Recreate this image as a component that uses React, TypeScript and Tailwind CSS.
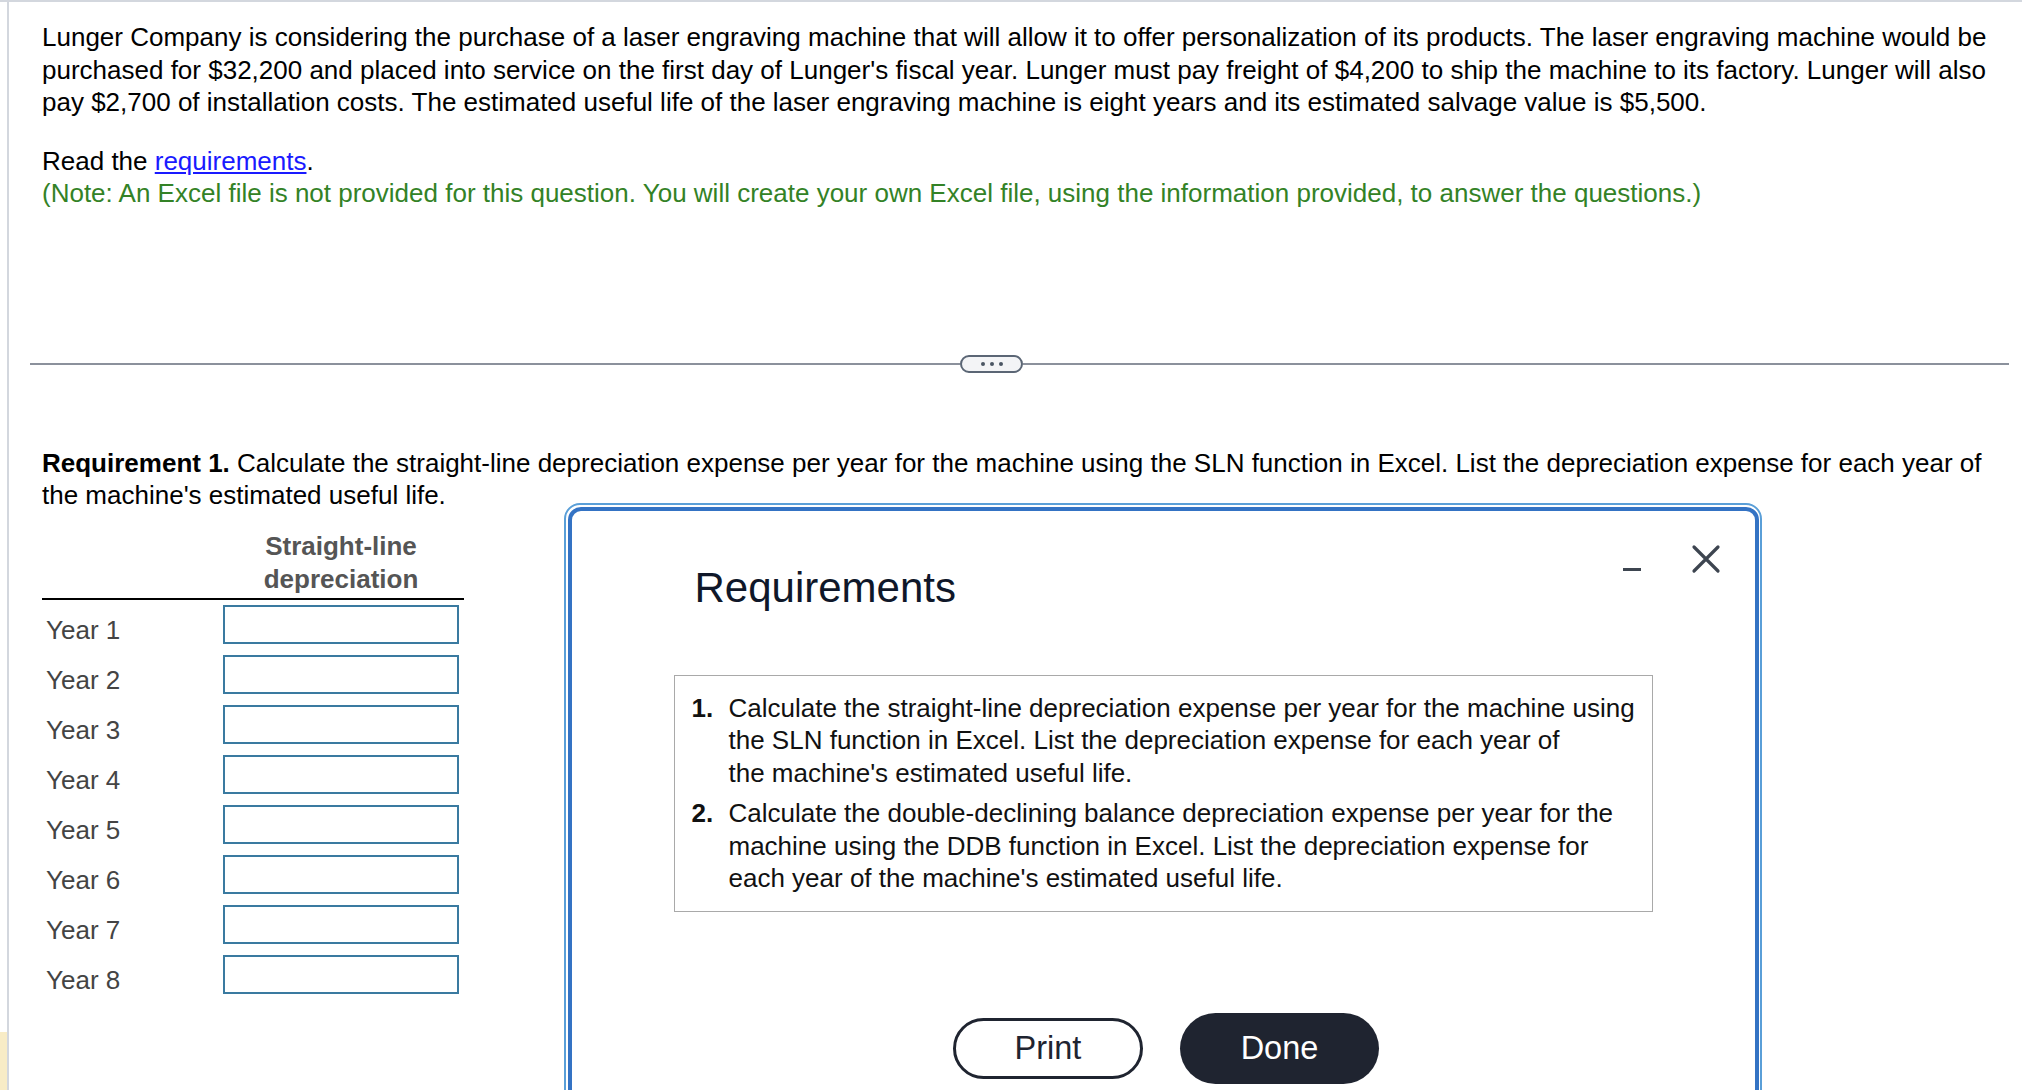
const years = ['Year 1', 'Year 2', 'Year 3', 'Year 4', 'Year 5', 'Year 6', 'Year 7', 'Year 8'];

const CloseIcon = () => (
  <svg width="30" height="30" viewBox="0 0 30 30" fill="none" stroke="#3d4550" strokeWidth="3.2" strokeLinecap="round">
    <path d="M3 3 L27 27 M27 3 L3 27" />
  </svg>
);

const RequirementsModal = () => {
  return (
    <div className="absolute left-[564px] top-[501px] w-[1198px] h-[640px] rounded-[16px] border-[2px] border-[#5a9fd8] p-[1.5px] bg-white">
      <div className="h-full rounded-[13px] border-[4px] border-[#3473c4] bg-white">
        {/* header */}
        <div className="flex items-start justify-between pl-[123px] pr-[34px] pt-[33px]">
          <div className="mt-[20px] text-[42px] leading-[48px] text-[#0f1729]">Requirements</div>
          <div className="flex items-start gap-[50px]">
            <div className="mt-[24px] h-[3px] w-[18px] bg-[#3d4550]" />
            <CloseIcon />
          </div>
        </div>

        {/* requirement list */}
        <div className="ml-[102px] mt-[63px] w-[979px] whitespace-nowrap border border-[#a9a9a9] px-[17px] py-[16px] text-[26px] leading-[32.5px] text-[#111]">
          <div className="flex">
            <span className="w-[37px] shrink-0 font-bold">1.</span>
            <span>
              Calculate the straight-line depreciation expense per year for the machine using
              <br />
              the SLN function in Excel. List the depreciation expense for each year of
              <br />
              the machine's estimated useful life.
            </span>
          </div>
          <div className="mt-[8px] flex">
            <span className="w-[37px] shrink-0 font-bold">2.</span>
            <span>
              Calculate the double-declining balance depreciation expense per year for the
              <br />
              machine using the DDB function in Excel. List the depreciation expense for
              <br />
              each year of the machine's estimated useful life.
            </span>
          </div>
        </div>

        {/* buttons */}
        <div className="mt-[101px] flex items-center justify-center gap-[37px] pl-[6px]">
          <button className="h-[61px] w-[190px] rounded-full border-[3px] border-[#1f2430] text-[32.5px] text-[#1f2430]">
            Print
          </button>
          <button className="h-[71px] w-[199px] rounded-full bg-[#1f2430] text-[32.5px] text-white">
            Done
          </button>
        </div>
      </div>
    </div>
  );
};

export default function App() {
  return (
    <div className="relative flex h-[1090px] w-[2022px] overflow-hidden border-t-2 border-[#d3d7de] bg-white font-['Liberation_Sans',Arial,sans-serif] text-black">
      {/* left edge strip */}
      <div className="flex w-[7px] flex-col justify-end">
        <div className="h-[58px] bg-[#f8ecc6]" />
      </div>

      <div className="flex-1 border-l-2 border-[#d3d7de] pl-[33px] pt-[19px]">
        <p className="text-[26px] leading-[32.5px] whitespace-nowrap">
          Lunger Company is considering the purchase of a laser engraving machine that will allow it to offer personalization of its products. The laser engraving machine would be
          <br />
          purchased for $32,200 and placed into service on the first day of Lunger's fiscal year. Lunger must pay freight of $4,200 to ship the machine to its factory. Lunger will also
          <br />
          pay $2,700 of installation costs. The estimated useful life of the laser engraving machine is eight years and its estimated salvage value is $5,500.
        </p>

        <p className="mt-[26px] text-[26px] leading-[32.5px]">
          Read the <span className="text-[#1a1aff] underline">requirements</span>.
        </p>
        <p className="text-[26px] leading-[32.5px] text-[#338226]">
          (Note: An Excel file is not provided for this question. You will create your own Excel file, using the information provided, to answer the questions.)
        </p>

        {/* divider */}
        <div className="-ml-[12px] mt-[145px] flex h-[18px] w-[1979px] items-center">
          <div className="h-[2px] w-[930px] bg-[#8b919c]" />
          <div className="flex h-[18px] w-[63px] items-center justify-center gap-[5px] rounded-full border-2 border-[#5b6675] bg-[#f3f4f6]">
            <span className="h-[4px] w-[4px] rounded-full bg-[#4b5563]" />
            <span className="h-[4px] w-[4px] rounded-full bg-[#4b5563]" />
            <span className="h-[4px] w-[4px] rounded-full bg-[#4b5563]" />
          </div>
          <div className="h-[2px] flex-1 bg-[#8b919c]" />
        </div>

        <p className="mt-[74px] text-[26px] leading-[32.5px] whitespace-nowrap">
          <span className="font-bold">Requirement 1.</span> Calculate the straight-line depreciation expense per year for the machine using the SLN function in Excel. List the depreciation expense for each year of
          <br />
          the machine's estimated useful life.
        </p>

        {/* table */}
        <div className="mt-[18px] w-[422px]">
          <div className="flex border-b-2 border-black pb-[2px]">
            <div className="w-[181px]" />
            <div className="w-[236px] text-center text-[26px] font-bold leading-[33px] text-[#555]">
              Straight-line
              <br />
              depreciation
            </div>
          </div>
          {years.map((y) => (
            <div key={y} className="flex h-[50px] items-center">
              <div className="w-[181px] pl-[4px] pt-[11px] text-[26px] text-[#444]">{y}</div>
              <div className="h-[39px] w-[236px] border-2 border-[#3a7aa0] bg-white" />
            </div>
          ))}
        </div>
      </div>

      <RequirementsModal />
    </div>
  );
}
